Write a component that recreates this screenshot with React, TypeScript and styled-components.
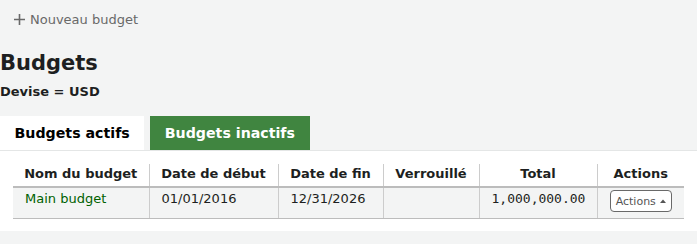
import React from 'react';
import styled, { createGlobalStyle } from 'styled-components';

const GlobalStyle = createGlobalStyle`
  html, body {
    margin: 0;
    padding: 0;
    background: #f3f4f4;
    font-family: "DejaVu Sans", "Liberation Sans", sans-serif;
    color: #1d1f21;
  }
`;

interface Budget {
  name: string;
  start: string;
  end: string;
  locked: string;
  total: string;
}

interface CellProps {
  align?: 'left' | 'right' | 'center';
  mono?: boolean;
}

const budgets: Budget[] = [
  { name: 'Main budget', start: '01/01/2016', end: '12/31/2026', locked: '', total: '1,000,000.00' },
];

const columns = [
  { label: 'Nom du budget', width: 136 },
  { label: 'Date de début', width: 129 },
  { label: 'Date de fin', width: 105 },
  { label: 'Verrouillé', width: 96 },
  { label: 'Total', width: 118 },
  { label: 'Actions', width: 87 },
];

const Page = styled.div`
  width: 697px;
`;

const Toolbar = styled.div`
  display: flex;
  align-items: center;
  height: 38px;
  padding-left: 14px;
`;

const ToolbarButton = styled.a`
  display: flex;
  align-items: center;
  gap: 5px;
  font-size: 13px;
  color: #696969;
  text-decoration: none;
  svg {
    display: block;
  }
`;

const Title = styled.h1`
  margin: 12px 0 0;
  font-size: 21px;
  line-height: 26px;
  font-weight: bold;
  color: #1d1f21;
`;

const Currency = styled.h3`
  margin: 7px 0 0;
  font-size: 13px;
  line-height: 17px;
  font-weight: bold;
  color: #1d1f21;
`;

const TabList = styled.div`
  display: flex;
  gap: 6px;
  margin-top: 16px;
  border-bottom: 1px solid #e4e6e6;
`;

const Tab = styled.div<{ active?: boolean }>`
  height: 34px;
  display: flex;
  align-items: center;
  padding: 0 14.5px;
  font-size: 14.2px;
  font-weight: bold;
  background: ${({ active }) => (active ? '#ffffff' : '#408540')};
  color: ${({ active }) => (active ? '#000000' : '#ffffff')};
  margin-bottom: ${({ active }) => (active ? '-1px' : '0')};
  position: relative;
`;

const Panel = styled.div`
  background: #ffffff;
  padding: 13px 13px 12px;
`;

const Table = styled.table`
  border-collapse: collapse;
  table-layout: fixed;
  width: 671px;
`;

const HeadCell = styled.th`
  height: 22px;
  padding: 0 6px;
  font-size: 13px;
  font-weight: bold;
  text-align: center;
  vertical-align: top;
  line-height: 19px;
  color: #1d1f21;
  border-left: 1px solid #cccccc;
  border-bottom: 2px solid #bcbcbc;
  &:first-child {
    border-left: none;
  }
`;

const Row = styled.tr`
  background: #f3f4f4;
`;

const Cell = styled.td<CellProps>`
  height: 28px;
  padding: 2px 12px 0;
  vertical-align: top;
  font-size: 13px;
  line-height: 18px;
  text-align: ${({ align }) => align || 'left'};
  font-family: ${({ mono }) => (mono ? '"DejaVu Sans Mono", "Liberation Mono", monospace' : 'inherit')};
  color: #1d1f21;
  border-left: 1px solid #cccccc;
  border-bottom: 1px solid #bcbcbc;
  &:first-child {
    border-left: none;
  }
`;

const BudgetLink = styled.a`
  color: #006100;
  text-decoration: none;
`;

const ActionsButton = styled.button`
  display: inline-flex;
  align-items: center;
  gap: 4px;
  height: 22px;
  padding: 0 5px;
  background: #ffffff;
  border: 1px solid #696969;
  border-radius: 4px;
  font-family: "DejaVu Sans", sans-serif;
  font-size: 11px;
  color: #555555;
`;

const Caret = () => (
  <svg width="6" height="4" viewBox="0 0 6 4">
    <path d="M0 4 L3 0.5 L6 4 Z" fill="#555555" />
  </svg>
);

const PlusIcon = () => (
  <svg width="11" height="11" viewBox="0 0 11 11">
    <path d="M5.5 0 V11 M0 5.5 H11" stroke="#696969" strokeWidth="1.6" />
  </svg>
);

export default function App() {
  return (
    <Page>
      <GlobalStyle />
      <Toolbar>
        <ToolbarButton href="#">
          <PlusIcon />
          Nouveau budget
        </ToolbarButton>
      </Toolbar>
      <Title>Budgets</Title>
      <Currency>Devise = USD</Currency>
      <TabList>
        <Tab active>Budgets actifs</Tab>
        <Tab>Budgets inactifs</Tab>
      </TabList>
      <Panel>
        <Table>
          <colgroup>
            {columns.map((c) => (
              <col key={c.label} style={{ width: c.width }} />
            ))}
          </colgroup>
          <thead>
            <tr>
              {columns.map((c) => (
                <HeadCell key={c.label}>{c.label}</HeadCell>
              ))}
            </tr>
          </thead>
          <tbody>
            {budgets.map((b) => (
              <Row key={b.name}>
                <Cell>
                  <BudgetLink href="#">{b.name}</BudgetLink>
                </Cell>
                <Cell>{b.start}</Cell>
                <Cell>{b.end}</Cell>
                <Cell>{b.locked}</Cell>
                <Cell align="right" mono>{b.total}</Cell>
                <Cell align="center">
                  <ActionsButton>
                    Actions <Caret />
                  </ActionsButton>
                </Cell>
              </Row>
            ))}
          </tbody>
        </Table>
      </Panel>
    </Page>
  );
}
